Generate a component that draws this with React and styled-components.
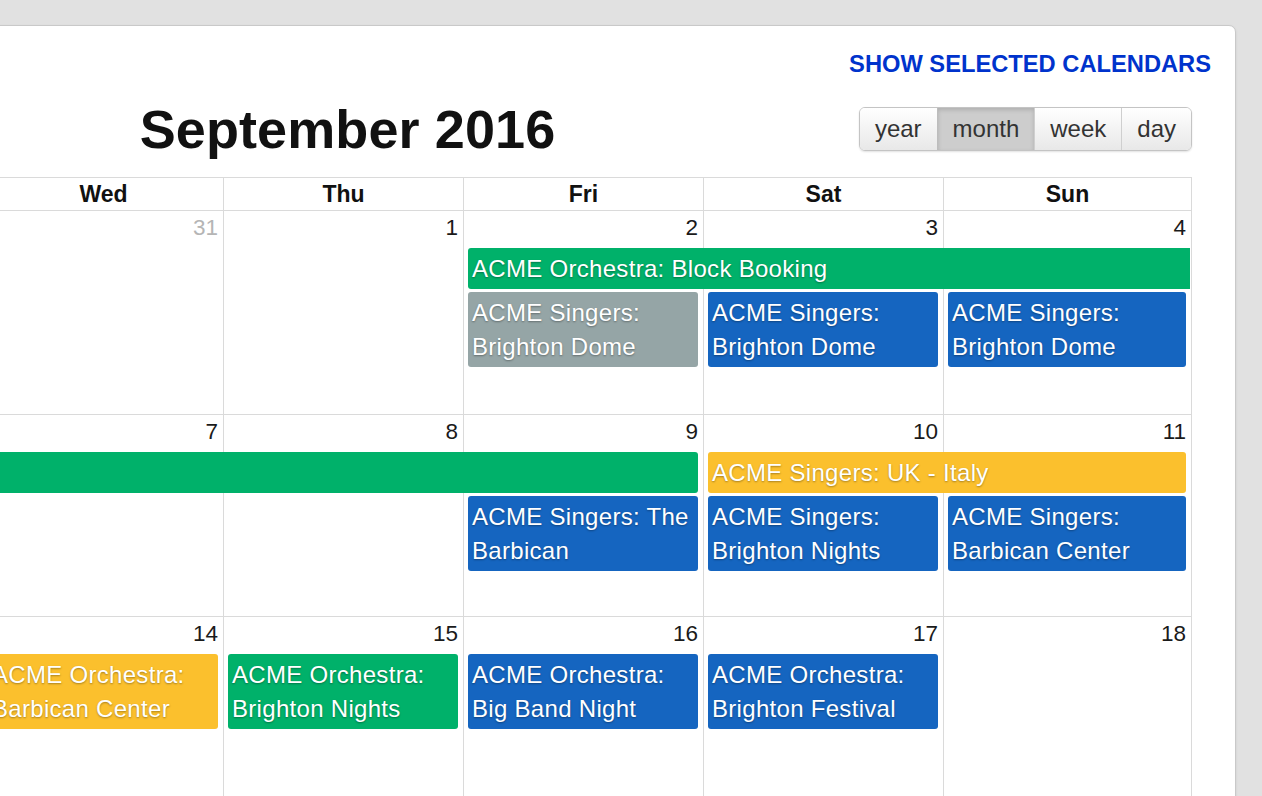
import React from 'react';
import styled, { createGlobalStyle, css } from 'styled-components';

const GlobalStyle = createGlobalStyle`
  html, body {
    margin: 0;
    padding: 0;
    background: #e1e1e1;
    font-family: "Liberation Sans", Arial, sans-serif;
  }
  * { box-sizing: border-box; }
`;

const Page = styled.div`
  height: 100vh;
  overflow: hidden;
  display: flex;
  justify-content: flex-end;
  align-items: flex-start;
  padding: 25px 26px 0 0;
`;

const Panel = styled.div`
  flex-shrink: 0;
  background: #ffffff;
  border: 1px solid #c9c9c9;
  border-radius: 7px;
  box-shadow: 0 1px 3px rgba(0, 0, 0, 0.08);
  padding: 24px 24px 40px 24px;
`;

const LinkBar = styled.div`
  display: flex;
  justify-content: flex-end;
`;

const ShowLink = styled.a`
  color: #0033cc;
  font-weight: bold;
  font-size: 23.7px;
  line-height: 28px;
  text-decoration: none;
  text-transform: uppercase;
  cursor: pointer;
`;

const Calendar = styled.div`
  margin: 29px 19px 0 20px;
`;

const Toolbar = styled.div`
  display: grid;
  grid-template-columns: 1fr auto 1fr;
  align-items: center;
  height: 44px;
  margin-bottom: 26px;
`;

const ToolRight = styled.div`
  display: flex;
  justify-content: flex-end;
`;

const Title = styled.h2`
  margin: 0;
  font-size: 54px;
  font-weight: bold;
  color: #111;
  line-height: 44px;
  letter-spacing: 0.1px;
`;

const ButtonGroup = styled.div`
  display: flex;
  border: 1px solid #c4c4c4;
  border-radius: 6px;
  overflow: hidden;
  box-shadow: 0 1px 2px rgba(0, 0, 0, 0.12);
`;

const ViewButton = styled.button`
  height: 42px;
  padding: 0 15px;
  border: none;
  border-left: 1px solid #cfcfcf;
  font-family: inherit;
  font-size: 24px;
  color: #333;
  background: linear-gradient(#ffffff, #e8e8e8);
  &:first-child { border-left: none; }
  ${p => p.$active && css`
    background: #cdcdcd;
    box-shadow: inset 0 2px 4px rgba(0, 0, 0, 0.15);
    border-left-color: #bdbdbd;
  `}
`;

const cols = 'repeat(6, 240px) 248px';

const HeadRow = styled.div`
  display: grid;
  grid-template-columns: ${cols};
  border-top: 1px solid #dadada;
  border-right: 1px solid #dadada;
`;

const HeadCell = styled.div`
  border-left: 1px solid #dadada;
  text-align: center;
  font-weight: bold;
  font-size: 23px;
  line-height: 32px;
  color: #111;
`;

const Week = styled.div`
  display: grid;
  grid-template-columns: ${cols};
  grid-template-rows: 37px auto auto 1fr;
  height: ${p => p.$h}px;
  border-top: 1px solid #dadada;
  border-right: 1px solid #dadada;
`;

const DayCell = styled.div`
  grid-row: 1 / -1;
  grid-column: ${p => p.$col};
  border-left: 1px solid #dadada;
  text-align: right;
  padding: 4px 5px 0 0;
`;

const DayNumber = styled.span`
  font-size: 22.5px;
  line-height: 26px;
  color: ${p => (p.$other ? '#b5b5b5' : '#1a1a1a')};
`;

const colors = {
  green: '#00b16a',
  grey: '#95a5a6',
  blue: '#1565c0',
  yellow: '#fbc02d',
};

const Event = styled.div`
  grid-row: ${p => p.$row + 1};
  grid-column: ${p => p.$col} / span ${p => p.$span};
  align-self: start;
  margin: 0 ${p => (p.$contR ? 1 : 5)}px 3px ${p => (p.$contL ? 0 : 5)}px;
  padding: 3.5px 4px;
  background: ${p => colors[p.$color]};
  border-radius: ${p => (p.$contL ? 0 : 3)}px ${p => (p.$contR ? 0 : 3)}px
    ${p => (p.$contR ? 0 : 3)}px ${p => (p.$contL ? 0 : 3)}px;
  color: #fff;
  font-size: 24px;
  line-height: 34px;
  letter-spacing: 0.3px;
  text-shadow: 0 1px 2px rgba(0, 0, 0, 0.35);
  white-space: ${p => (p.$span > 1 ? 'nowrap' : 'normal')};
  overflow: hidden;
`;

const dayNames = ['Mon', 'Tue', 'Wed', 'Thu', 'Fri', 'Sat', 'Sun'];

const weeks = [
  {
    h: 204,
    days: [[29, true], [30, true], [31, true], [1], [2], [3], [4]],
    events: [
      { row: 1, col: 5, span: 3, color: 'green', contR: true, title: 'ACME Orchestra: Block Booking' },
      { row: 2, col: 5, span: 1, color: 'grey', title: 'ACME Singers: Brighton Dome' },
      { row: 2, col: 6, span: 1, color: 'blue', title: 'ACME Singers: Brighton Dome' },
      { row: 2, col: 7, span: 1, color: 'blue', title: 'ACME Singers: Brighton Dome' },
    ],
  },
  {
    h: 202,
    days: [[5], [6], [7], [8], [9], [10], [11]],
    events: [
      { row: 1, col: 1, span: 5, color: 'green', contL: true, title: 'ACME Orchestra: Block Booking' },
      { row: 1, col: 6, span: 2, color: 'yellow', title: 'ACME Singers: UK - Italy' },
      { row: 2, col: 5, span: 1, color: 'blue', title: 'ACME Singers: The Barbican' },
      { row: 2, col: 6, span: 1, color: 'blue', title: 'ACME Singers: Brighton Nights' },
      { row: 2, col: 7, span: 1, color: 'blue', title: 'ACME Singers: Barbican Center' },
    ],
  },
  {
    h: 202,
    days: [[12], [13], [14], [15], [16], [17], [18]],
    events: [
      { row: 1, col: 3, span: 1, color: 'yellow', title: 'ACME Orchestra: Barbican Center' },
      { row: 1, col: 4, span: 1, color: 'green', title: 'ACME Orchestra: Brighton Nights' },
      { row: 1, col: 5, span: 1, color: 'blue', title: 'ACME Orchestra: Big Band Night' },
      { row: 1, col: 6, span: 1, color: 'blue', title: 'ACME Orchestra: Brighton Festival' },
    ],
  },
];

const App = () => {
  return (
    <>
      <GlobalStyle />
      <Page>
        <Panel>
          <LinkBar>
            <ShowLink>Show selected calendars</ShowLink>
          </LinkBar>
          <Calendar>
            <Toolbar>
              <div />
              <Title>September 2016</Title>
              <ToolRight>
                <ButtonGroup>
                  <ViewButton>year</ViewButton>
                  <ViewButton $active>month</ViewButton>
                  <ViewButton>week</ViewButton>
                  <ViewButton>day</ViewButton>
                </ButtonGroup>
              </ToolRight>
            </Toolbar>
            <HeadRow>
              {dayNames.map(d => (
                <HeadCell key={d}>{d}</HeadCell>
              ))}
            </HeadRow>
            {weeks.map((w, wi) => (
              <Week key={wi} $h={w.h}>
                {w.days.map(([n, other], i) => (
                  <DayCell key={i} $col={i + 1}>
                    <DayNumber $other={other}>{n}</DayNumber>
                  </DayCell>
                ))}
                {w.events.map((e, ei) => (
                  <Event
                    key={ei}
                    $row={e.row}
                    $col={e.col}
                    $span={e.span}
                    $color={e.color}
                    $contL={e.contL}
                    $contR={e.contR}
                  >
                    {e.title}
                  </Event>
                ))}
              </Week>
            ))}
          </Calendar>
        </Panel>
      </Page>
    </>
  );
};

export default App;
